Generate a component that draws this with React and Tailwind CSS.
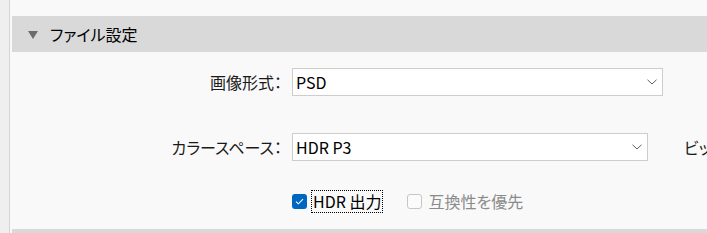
import React from 'react';

const FONT = "font-['Noto_Sans_CJK_JP','Noto_Sans',sans-serif] [font-feature-settings:'palt']";

function Chevron() {
  return (
    <svg width="10" height="6" viewBox="0 0 10 6" className="shrink-0">
      <path d="M0.5 0.8 L5 5 L9.5 0.8" fill="none" stroke="#606060" strokeWidth="1" />
    </svg>
  );
}

function Select({ value, width }) {
  return (
    <div
      className={`flex h-[28px] shrink-0 items-center justify-between border border-[#cdcdcd] bg-white pl-[3px] pr-[5px] text-[16px] text-black ${width}`}
    >
      <span>{value}</span>
      <Chevron />
    </div>
  );
}

function Label({ children }) {
  return <div className="w-[280px] shrink-0 pr-[10px] text-right text-[16px] text-[#1a1a1a]">{children}</div>;
}

export default function App() {
  return (
    <div className={`flex h-[233px] w-[707px] overflow-hidden bg-[#f9f9f9] ${FONT}`}>
      <div className="w-[9px] shrink-0 bg-[#efefef]" />
      <div className="w-px shrink-0 bg-[#d4d4d4]" />
      <div className="flex min-w-0 flex-1 flex-col pl-[2px] pt-[16px]">
        <div className="flex h-[36px] shrink-0 items-center bg-[#d9d9d9] pl-[16px]">
          <svg width="10" height="8" viewBox="0 0 10 8" className="mt-[1px] shrink-0">
            <path d="M0 0 H10 L5 8 Z" fill="#6b6b6b" />
          </svg>
          <span className="ml-[12px] text-[16px] text-black">ファイル設定</span>
        </div>

        <div className="mt-[16px] flex items-center whitespace-nowrap">
          <Label>画像形式：</Label>
          <Select value="PSD" width="w-[371px]" />
        </div>

        <div className="mt-[37px] flex items-center whitespace-nowrap">
          <Label>カラースペース：</Label>
          <Select value="HDR P3" width="w-[356px]" />
          <span className="ml-[36px] shrink-0 text-[16px] text-[#1a1a1a]">ビット数：</span>
        </div>

        <div className="mt-[28px] flex items-center whitespace-nowrap pl-[280px] text-[16px]">
          <span className="flex h-[15px] w-[15px] shrink-0 items-center justify-center rounded-[3px] bg-[#0067c0]">
            <svg width="9" height="7" viewBox="0 0 9 7">
              <path d="M1 3.6 L3.4 5.8 L8 1.2" fill="none" stroke="white" strokeWidth="1.1" />
            </svg>
          </span>
          <span className="ml-[4px] border border-dotted border-black px-px leading-[21px] text-black">HDR 出力</span>
          <span className="ml-[24px] h-[15px] w-[15px] shrink-0 rounded-[3px] border border-[#c6c6c6] bg-[#fbfbfb]" />
          <span className="ml-[6px] text-[#8b8b8b]">互換性を優先</span>
        </div>

        <div className="mt-[16px] h-[20px] shrink-0 bg-[#d9d9d9]" />
      </div>
    </div>
  );
}
